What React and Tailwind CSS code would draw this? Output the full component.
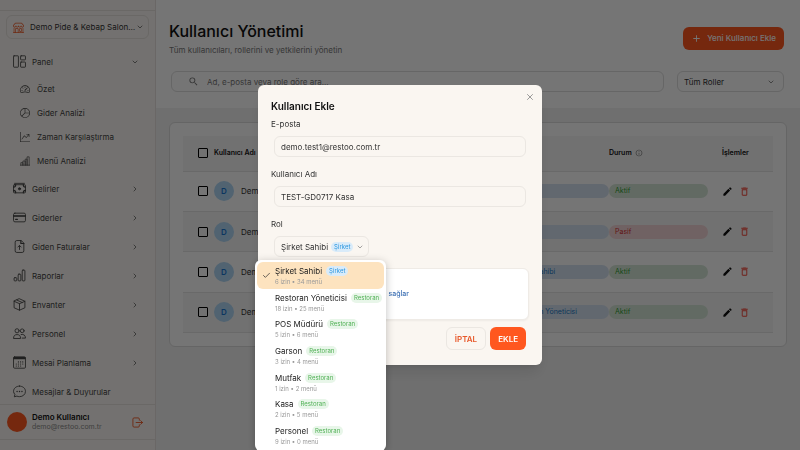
import { useState } from "react";
import { BsShop, BsSpeedometer2, BsPieChart, BsGraphUpArrow } from "react-icons/bs";
import { MdAdd, MdDeleteOutline, MdEdit, MdInfoOutline, MdSearch } from "react-icons/md";
import { Check, ChevronDown, ChevronRight, X } from "lucide-react";

const Svg = ({ children, size = 13 }) => (
    <svg
        width={size}
        height={size}
        viewBox="0 0 24 24"
        fill="none"
        stroke="currentColor"
        strokeWidth="1.6"
        strokeLinecap="round"
        strokeLinejoin="round"
        className="shrink-0"
        aria-hidden="true"
    >
        {children}
    </svg>
);

const LayoutIcon = () => (
    <Svg>
        <rect x="1" y="1.5" width="9" height="21" rx="1" />
        <rect x="14" y="1.5" width="9" height="7.5" rx="1" />
        <rect x="14" y="13" width="9" height="9.5" rx="1" />
    </Svg>
);

const CashIcon = () => (
    <Svg>
        <rect x="1" y="5" width="22" height="15" rx="1.5" />
        <path d="M3 2.5h18" />
        <circle cx="12" cy="12.5" r="2" fill="currentColor" />
        <path d="M1 9.5c2.5 0 4-2 4-4.5M23 9.5c-2.5 0-4-2-4-4.5M1 15.5c2.5 0 4 2 4 4.5M23 15.5c-2.5 0-4 2-4 4.5" strokeWidth="2.2" />
    </Svg>
);

const CardIcon = () => (
    <Svg>
        <rect x="1" y="4" width="22" height="16" rx="2.5" />
        <path d="M1 8.5h22M1 10h22" />
        <path d="M5 15.5h3" strokeWidth="2.5" />
    </Svg>
);

const InvoiceIcon = () => (
    <Svg>
        <path d="M14.5 1H7a3 3 0 0 0-3 3v16a3 3 0 0 0 3 3h10a3 3 0 0 0 3-3V6.5z" />
        <path d="M14.5 1v5.5H20" strokeWidth="2.2" />
        <path d="M12 17.5v-7M9 13l3-3 3 3" />
    </Svg>
);

const BarsIcon = () => (
    <Svg>
        <rect x="2" y="16" width="5" height="6" rx="1.5" />
        <rect x="9.5" y="9.5" width="5" height="12.5" rx="1.5" />
        <rect x="17" y="2" width="5" height="20" rx="1.5" />
    </Svg>
);

const StepsIcon = ({ size }) => (
    <Svg size={size}>
        <path d="M2 22v-6h5v6M7 22V12h5.5v10M12.5 22V7.5H17V22M17 22V2h5v20M1 22h22" />
    </Svg>
);

const BoxIcon = () => (
    <Svg>
        <path d="M12 1.5 22 6v12l-10 4.5L2 18V6z" />
        <path d="M2 6l10 4.5L22 6M12 10.5v12M7 3.8l10 4.5" />
    </Svg>
);

const PeopleIcon = () => (
    <Svg>
        <circle cx="7.5" cy="7" r="3.8" />
        <circle cx="17" cy="7" r="3.5" />
        <path d="M1 20.5c0-4.5 2.5-6.5 6.5-6.5s6.5 2 6.5 6.5zM15 13.8c5-1 8 1.7 8 6.7h-6" />
    </Svg>
);

const CalendarIcon = () => (
    <Svg>
        <rect x="1" y="1.5" width="22" height="21" rx="2" />
        <path d="M2.5 4h19" strokeWidth="4" />
        <path d="M10 11h.1M14 11h.1M18 11h.1M6 14.8h.1M10 14.8h.1M14 14.8h.1M18 14.8h.1M6 18.5h.1M10 18.5h.1M14 18.5h.1" strokeWidth="2.2" />
    </Svg>
);

const MessageIcon = () => (
    <Svg>
        <path d="M12 2c6 0 11 4 11 9.8s-5 9.7-11 9.7c-1.7 0-3.3-.3-4.8-1l-4.7 1.300 1-4.500C2 15.700 1 14 1 11.800 1 6 6 2 12 2z" />
        <path d="M7.5 12h.1M12 12h.1M16.5 12h.1" strokeWidth="2.5" />
    </Svg>
);

const LogoutIcon = () => (
    <Svg size={11}>
        <path d="M16 7V4.5A2.5 2.5 0 0 0 13.5 2h-9A2.5 2.5 0 0 0 2 4.5v15A2.5 2.5 0 0 0 4.5 22h9a2.5 2.5 0 0 0 2.5-2.5V17M9 12h14M19 8l4 4-4 4" strokeWidth="2" />
    </Svg>
);

const panelLinks = [
    { label: "Özet", icon: <BsSpeedometer2 size={10} /> },
    { label: "Gider Analizi", icon: <BsPieChart size={10} /> },
    { label: "Zaman Karşılaştırma", icon: <BsGraphUpArrow size={10} /> },
    { label: "Menü Analizi", icon: <StepsIcon size={10} /> },
];

const menuLinks = [
    { label: "Gelirler", icon: <CashIcon />, more: true },
    { label: "Giderler", icon: <CardIcon />, more: true },
    { label: "Giden Faturalar", icon: <InvoiceIcon />, more: true },
    { label: "Raporlar", icon: <BarsIcon />, more: true },
    { label: "Envanter", icon: <BoxIcon />, more: true },
    { label: "Personel", icon: <PeopleIcon />, more: true },
    { label: "Mesai Planlama", icon: <CalendarIcon />, more: true },
    { label: "Mesajlar & Duyurular", icon: <MessageIcon />, more: false },
];

const users = [
    { id: 1, name: "Demo", role: "Kasa", active: true },
    { id: 2, name: "Demo", role: "Kasa", active: false },
    { id: 3, name: "Demo", role: "Şirket Sahibi", active: true },
    { id: 4, name: "Demo", role: "Restoran Yöneticisi", active: true },
];

const roles = [
    { name: "Şirket Sahibi", scope: "Şirket", info: "6 izin • 34 menü" },
    { name: "Restoran Yöneticisi", scope: "Restoran", info: "18 izin • 25 menü" },
    { name: "POS Müdürü", scope: "Restoran", info: "5 izin • 6 menü" },
    { name: "Garson", scope: "Restoran", info: "3 izin • 4 menü" },
    { name: "Mutfak", scope: "Restoran", info: "1 izin • 2 menü" },
    { name: "Kasa", scope: "Restoran", info: "2 izin • 5 menü" },
    { name: "Personel", scope: "Restoran", info: "9 izin • 0 menü" },
];

const ScopeBadge = ({ scope }) => (
    <span
        className={`rounded-full px-[3px] text-[6px] leading-[10px] ${
            scope === "Şirket" ? "bg-[#d9ebf9] text-[#2b97e0]" : "bg-[#e8f6e9] text-[#4fb054]"
        }`}
    >
        {scope}
    </span>
);

const Sidebar = () => (
    <aside className="flex w-[156px] shrink-0 flex-col border-r border-[#e6e0de] bg-[#fbf7f3] text-[#444]">
        <div className="h-[11px] shrink-0 border-b border-[#e6e2de]" />
        <div className="mx-1.5 mt-1 flex h-6 shrink-0 items-center rounded-md border border-[#e6e2de] pl-1.5 pr-1">
            <BsShop size={11} className="shrink-0 text-[#f05a28]" />
            <select aria-label="Şirket" className="ml-1.5 h-5 min-w-0 flex-1 appearance-none bg-transparent text-[8px] text-[#333] outline-none">
                <option>Demo Pide &amp; Kebap Salon…</option>
            </select>
            <ChevronDown size={8} className="shrink-0" />
        </div>

        {/* Menu */}
        <nav className="mt-2 min-h-0 flex-1 overflow-hidden pl-[13px] pr-4 text-[8px]">
            <a href="#panel" className="flex h-[29px] items-center gap-1.5">
                <LayoutIcon />
                <span className="flex-1">Panel</span>
                <ChevronDown size={8} />
            </a>
            <div className="py-px">
                {panelLinks.map((link) => (
                    <a key={link.label} href="#panel" className="flex h-6 items-center gap-[7px] pl-[7px]">
                        {link.icon}
                        <span>{link.label}</span>
                    </a>
                ))}
            </div>
            {menuLinks.map((link) => (
                <a key={link.label} href="#menu" className="flex h-[29px] items-center gap-1.5">
                    {link.icon}
                    <span className="flex-1 whitespace-nowrap">{link.label}</span>
                    {link.more && <ChevronRight size={8} />}
                </a>
            ))}
        </nav>

        {/* Signed in user */}
        <div className="mb-2.5 flex h-9 shrink-0 items-center border-y border-[#e6e2de] pl-[7px] pr-3">
            <span className="size-5 rounded-full bg-[#ff571f]" />
            <div className="ml-[5px] flex-1 leading-[10px]">
                <p className="text-[8px] font-semibold text-[#111]">Demo Kullanıcı</p>
                <p className="text-[7px] text-[#8a8a8a]">demo@restoo.com.tr</p>
            </div>
            <button aria-label="Çıkış" className="text-[#f05a28]">
                <LogoutIcon />
            </button>
        </div>
    </aside>
);

const UserTable = () => (
    <div className="mx-[13px] mt-3.5 rounded-md border border-[#dcdcdc] bg-white p-[13px]">
        <table className="h-[197px] w-full table-fixed text-left text-[8px] text-[#333]">
            <colgroup>
                <col className="w-[31px]" />
                <col />
                <col className="w-[103px]" />
                <col className="w-[99px]" />
                <col className="w-[65px]" />
            </colgroup>
            <thead>
                <tr className="h-[35px] border-b border-[#e4e4e4] bg-[#f7f7f7] text-[7px] text-[#111]">
                    <th className="pl-[15px]">
                        <input type="checkbox" aria-label="Tümünü seç" className="block size-2.5 appearance-none rounded-[1px] border border-black" />
                    </th>
                    <th className="font-semibold">Kullanıcı Adı</th>
                    <th className="font-semibold">Rol</th>
                    <th className="font-semibold">
                        <span className="flex items-center gap-[3px]">
                            Durum <MdInfoOutline size={8} className="text-[#777]" />
                        </span>
                    </th>
                    <th className="pl-3.5 font-semibold">İşlemler</th>
                </tr>
            </thead>
            <tbody>
                {users.map((user) => (
                    <tr key={user.id} className="border-b border-[#e4e4e4] even:bg-[#f7f7f7]">
                        <td className="pl-[15px]">
                            <input type="checkbox" aria-label={`${user.name} ${user.id}`} className="block size-2.5 appearance-none rounded-[1px] border border-black" />
                        </td>
                        <td>
                            <div className="flex items-center gap-[7px]">
                                <span className="flex size-5 items-center justify-center rounded-full bg-[#b0d8f6] font-semibold text-[#1976d2]">D</span>
                                {user.name}
                            </div>
                        </td>
                        <td>
                            <span className="block rounded-full bg-[#d6e3f2] px-2 text-[7px] leading-[14px] text-[#1976c2]">{user.role}</span>
                        </td>
                        <td>
                            <span
                                className={`block rounded-full px-1.5 text-[7px] leading-[14px] ${
                                    user.active ? "bg-[#d6e8d7] text-[#2e9d34]" : "bg-[#f5d5d8] text-[#d32f2f]"
                                }`}
                            >
                                {user.active ? "Aktif" : "Pasif"}
                            </span>
                        </td>
                        <td className="pl-3.5">
                            <div className="flex gap-1.5">
                                <button aria-label="Düzenle" className="text-[#111]">
                                    <MdEdit size={11} />
                                </button>
                                <button aria-label="Sil" className="text-[#f44336]">
                                    <MdDeleteOutline size={11} />
                                </button>
                            </div>
                        </td>
                    </tr>
                ))}
            </tbody>
        </table>
    </div>
);

const RoleMenu = ({ selected, onSelect }) => (
    <ul
        role="listbox"
        aria-label="Rol"
        className="absolute -left-[19px] top-6 grid h-[191px] w-[131px] grid-rows-7 rounded-md bg-white p-0.5 shadow-[0_2px_8px_rgba(0,0,0,0.25)]"
    >
        {roles.map((item) => (
            <li
                key={item.name}
                role="option"
                aria-selected={item.name === selected.name}
                onClick={() => onSelect(item)}
                className="flex cursor-pointer items-center rounded-md pl-[5px] aria-selected:bg-[#fde3bf]"
            >
                <span className="w-[13px] shrink-0">{item.name === selected.name && <Check size={9} />}</span>
                <span className="whitespace-nowrap">
                    <span className="flex items-center gap-1 text-[8px] leading-3 text-[#222]">
                        {item.name}
                        <ScopeBadge scope={item.scope} />
                    </span>
                    <span className="mt-px block text-[6px] leading-2 text-[#999]">{item.info}</span>
                </span>
            </li>
        ))}
    </ul>
);

const AddUserDialog = () => {
    const [email, setEmail] = useState("demo.test1@restoo.com.tr");
    const [username, setUsername] = useState("TEST-GD0717 Kasa");
    const [role, setRole] = useState(roles[0]);
    const [open, setOpen] = useState(true);

    const inputClass = "mx-[3px] mt-1.5 h-[21px] rounded-md border border-[#ebe7e2] bg-transparent px-1.5 text-[8px] text-[#333] outline-none";

    return (
        <div className="fixed inset-0 flex items-center justify-center bg-black/54">
            <form
                role="dialog"
                aria-label="Kullanıcı Ekle"
                onSubmit={(e) => e.preventDefault()}
                className="relative flex w-[284px] flex-col rounded-md bg-[#faf6f1] px-[13px] pb-[15px] pt-3.5 text-[8px] text-[#333] shadow-lg"
            >
                <button type="button" aria-label="Kapat" className="absolute right-[7px] top-[7px] text-[#888]">
                    <X size={10} />
                </button>
                <h2 className="text-[10px] font-semibold leading-[14px] text-[#111]">Kullanıcı Ekle</h2>

                <label htmlFor="email" className="mt-[5px] leading-3">E-posta</label>
                <input id="email" value={email} onChange={(e) => setEmail(e.target.value)} className={inputClass} />

                <label htmlFor="username" className="mt-[11px] leading-3">Kullanıcı Adı</label>
                <input id="username" value={username} onChange={(e) => setUsername(e.target.value)} className={inputClass} />

                <label htmlFor="role" className="mt-[11px] leading-3">Rol</label>
                <div className="relative mx-[3px] mt-1.5">
                    <button
                        id="role"
                        type="button"
                        aria-haspopup="listbox"
                        aria-expanded={open}
                        onClick={() => setOpen(!open)}
                        className="flex h-[21px] items-center gap-[3px] rounded-md border border-[#ebe7e2] pl-1.5 pr-1"
                    >
                        {role.name}
                        <ScopeBadge scope={role.scope} />
                        <ChevronDown size={8} className="text-[#777]" />
                    </button>
                    {open && <RoleMenu selected={role} onSelect={setRole} />}
                </div>

                <div className="mt-[11px] flex h-[52px] items-center rounded-md border border-[#efebe6] bg-white px-[13px] text-[7px] font-medium text-[#3f72b5] shadow-xs">
                    Şirketteki tüm restoranlara izin sağlar
                </div>

                <div className="mr-[3px] mt-[7px] flex justify-end gap-1 text-[8px] font-semibold">
                    <button type="button" className="h-[23px] rounded-md border border-[#ebe7e2] px-2 text-[#e8592b]">İPTAL</button>
                    <button type="submit" className="h-[23px] rounded-md bg-[#ff571f] px-2 text-white">EKLE</button>
                </div>
            </form>
        </div>
    );
};

const App = () => (
    <div className="flex h-screen overflow-hidden bg-[#f1f1f1] font-[Inter,sans-serif]">
        <Sidebar />
        <main className="min-w-0 flex-1">
            <header className="bg-white px-[13px] pb-4 pt-5">
                <div className="flex items-center justify-between pr-[3px]">
                    <div>
                        <h1 className="text-[16px] font-medium leading-[22px] text-[#111]">Kullanıcı Yönetimi</h1>
                        <p className="mt-0.5 text-[8px] leading-3 text-[#777]">Tüm kullanıcıları, rollerini ve yetkilerini yönetin</p>
                    </div>
                    <button className="flex h-[23px] items-center gap-[5px] rounded-md bg-[#ff571f] px-2 text-[8px] font-medium text-white">
                        <MdAdd size={11} /> Yeni Kullanıcı Ekle
                    </button>
                </div>
                <div className="mt-[15px] flex gap-[13px] pl-0.5 pr-[3px]">
                    <div className="flex h-[21px] flex-1 items-center gap-2 rounded-md border border-[#dedede] pl-4">
                        <MdSearch size={11} className="shrink-0 text-[#777]" />
                        <input aria-label="Ara" placeholder="Ad, e-posta veya role göre ara..." className="w-full bg-transparent text-[8px] outline-none placeholder:text-[#777]" />
                    </div>
                    <div className="flex h-[21px] w-[107px] items-center rounded-md border border-[#dedede] pl-1.5 pr-2">
                        <select aria-label="Rol filtresi" className="w-full appearance-none bg-transparent text-[8px] text-[#333] outline-none">
                            <option>Tüm Roller</option>
                        </select>
                        <ChevronDown size={8} className="shrink-0 text-[#555]" />
                    </div>
                </div>
            </header>
            <UserTable />
        </main>
        <AddUserDialog />
    </div>
);

export default App;
